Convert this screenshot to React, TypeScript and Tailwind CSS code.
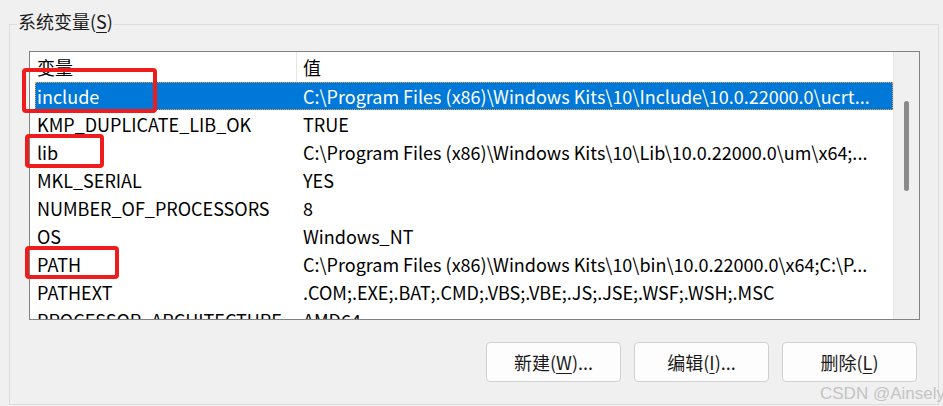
import React from "react";

type Row = { name: string; value: string };

const ROWS: Row[] = [
  { name: "include", value: "C:\\Program Files (x86)\\Windows Kits\\10\\Include\\10.0.22000.0\\ucrt..." },
  { name: "KMP_DUPLICATE_LIB_OK", value: "TRUE" },
  { name: "lib", value: "C:\\Program Files (x86)\\Windows Kits\\10\\Lib\\10.0.22000.0\\um\\x64;..." },
  { name: "MKL_SERIAL", value: "YES" },
  { name: "NUMBER_OF_PROCESSORS", value: "8" },
  { name: "OS", value: "Windows_NT" },
  { name: "PATH", value: "C:\\Program Files (x86)\\Windows Kits\\10\\bin\\10.0.22000.0\\x64;C:\\P..." },
  { name: "PATHEXT", value: ".COM;.EXE;.BAT;.CMD;.VBS;.VBE;.JS;.JSE;.WSF;.WSH;.MSC" },
  { name: "PROCESSOR_ARCHITECTURE", value: "AMD64" },
];

function VarRow({ row, selected }: { row: Row; selected: boolean }) {
  return (
    <div className="flex h-[28px] pl-[5px] shrink-0">
      <div
        className={
          selected
            ? "flex flex-1 items-center bg-[#0078d7] text-white border border-dotted border-[#f0a040]"
            : "flex flex-1 items-center border border-transparent"
        }
      >
        <div className="w-[266px] pl-[1px] whitespace-nowrap">{row.name}</div>
        <div className="pl-[1px] whitespace-nowrap">{row.value}</div>
      </div>
    </div>
  );
}

function Button({ label, hotkey, tail }: { label: string; hotkey: string; tail: string }) {
  return (
    <button className="w-[135px] h-[40px] rounded-[4px] border border-[#d0d0d0] bg-[#fdfdfd] text-[18px] text-[#1a1a1a]">
      {label}(<span className="underline underline-offset-[3px]">{hotkey}</span>){tail}
    </button>
  );
}

export default function App() {
  return (
    <div
      className="relative w-[943px] h-[406px] overflow-hidden bg-[#f0f0f0] text-[18px] text-black"
      style={{ fontFamily: '"Noto Sans CJK SC", "Noto Sans", sans-serif' }}
    >
      <div className="relative ml-[9px] mt-[24px] w-[930px] h-[381px] border border-[#dcdcdc]">
        <div className="absolute left-[7px] -top-[18px] bg-[#f0f0f0] px-[1px] text-[18px] leading-[28px] text-[#1a1a1a]">
          系统变量(<span className="underline underline-offset-[3px]">S</span>)
        </div>

        <div className="ml-[19px] mt-[26px] w-[891px] h-[269px] border border-[#828282] bg-white flex">
          <div className="flex-1 flex flex-col overflow-hidden">
            <div className="flex h-[30px] shrink-0 items-center">
              <div className="w-[266px] pl-[7px]">变量</div>
              <div className="self-stretch w-px bg-[#e5e5e5]" />
              <div className="pl-[6px]">值</div>
            </div>
            {ROWS.map((r, i) => (
              <VarRow key={r.name} row={r} selected={i === 0} />
            ))}
          </div>
          <div className="w-[26px] bg-[#f0f0f0] border-l border-[#e6e6e6] flex justify-center pt-[49px]">
            <div className="w-[5px] h-[90px] rounded-full bg-[#8a8a8a]" />
          </div>
        </div>

        <div className="flex justify-end gap-[13px] mt-[22px] mr-[21px]">
          <Button label="新建" hotkey="W" tail="..." />
          <Button label="编辑" hotkey="I" tail="..." />
          <Button label="删除" hotkey="L" tail="" />
        </div>
      </div>

      <div className="absolute left-[22px] top-[68px] w-[135px] h-[45px] border-[4px] border-[#ee1c1c] rounded-[4px]" />
      <div className="absolute left-[25px] top-[134px] w-[79px] h-[34px] border-[4px] border-[#ee1c1c] rounded-[4px]" />
      <div className="absolute left-[25px] top-[246px] w-[94px] h-[33px] border-[4px] border-[#ee1c1c] rounded-[4px]" />

      <div
        className="absolute left-[820px] top-[381px] whitespace-nowrap text-[17px] text-[#c4c4c4]"
        style={{ fontFamily: '"Liberation Sans", sans-serif' }}
      >
        CSDN @Ainsely
      </div>
    </div>
  );
}
